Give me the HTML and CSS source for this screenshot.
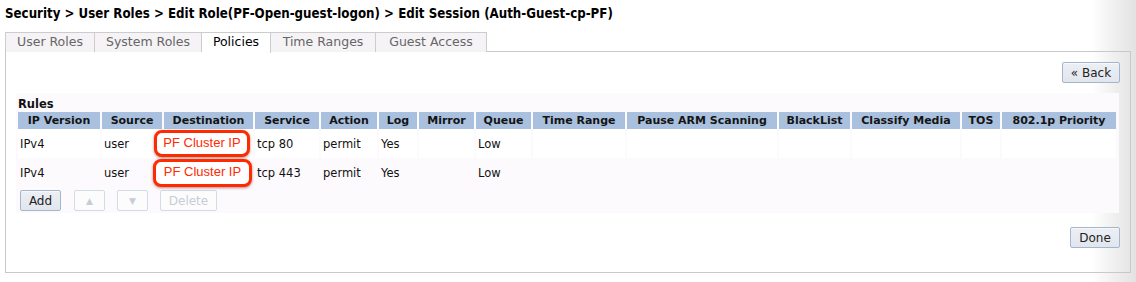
FILE: index.html
```html
<!DOCTYPE html>
<html>
<head>
<meta charset="utf-8">
<link rel="stylesheet" href="styles.css">
</head>
<body>
<div class="page">
  <div class="crumb">Security &gt; User Roles &gt; Edit Role(PF-Open-guest-logon) &gt; Edit Session (Auth-Guest-cp-PF)</div>
  <div class="tabs">
    <div class="tab t1">User Roles</div>
    <div class="tab t2">System Roles</div>
    <div class="tab t3 active">Policies</div>
    <div class="tab t4">Time Ranges</div>
    <div class="tab t5">Guest Access</div>
  </div>
  <div class="panel">
    <div class="toolbar"><button class="btn back">« Back</button></div>
    <div class="rules">
      <div class="rules-title">Rules</div>
      <table class="grid">
        <colgroup>
          <col class="w-ipv"><col class="w-src"><col class="w-dst"><col class="w-svc"><col class="w-act"><col class="w-log"><col class="w-mir"><col class="w-que"><col class="w-tr"><col class="w-arm"><col class="w-bl"><col class="w-cm"><col class="w-tos"><col class="w-pri">
        </colgroup>
        <thead>
          <tr>
            <th>IP Version</th><th>Source</th><th>Destination</th><th>Service</th><th>Action</th><th>Log</th><th>Mirror</th><th>Queue</th><th>Time Range</th><th>Pause ARM Scanning</th><th>BlackList</th><th>Classify Media</th><th>TOS</th><th>802.1p Priority</th>
          </tr>
        </thead>
        <tbody>
          <tr class="r1">
            <td>IPv4</td><td>user</td><td><span class="hl">PF Cluster IP</span></td><td>tcp 80</td><td>permit</td><td>Yes</td><td></td><td>Low</td><td></td><td></td><td></td><td></td><td></td><td></td>
          </tr>
          <tr class="r2">
            <td>IPv4</td><td>user</td><td><span class="hl hl2">PF Cluster IP</span></td><td>tcp 443</td><td>permit</td><td>Yes</td><td></td><td>Low</td><td></td><td></td><td></td><td></td><td></td><td></td>
          </tr>
        </tbody>
      </table>
      <div class="btnrow">
        <button class="btn add">Add</button>
        <button class="btn sm dis">▲</button>
        <button class="btn sm dis">▼</button>
        <button class="btn del dis">Delete</button>
      </div>
    </div>
    <div class="footer"><button class="btn done">Done</button></div>
  </div>
</div>
</body>
</html>
```
FILE: styles.css
```css
html, body {
  margin: 0;
  padding: 0;
  height: 100%;
}
html {
  background: linear-gradient(to right, #ffffff 1092px, #f1f1f1 1112px, #e2e2e2 1136px);
}
body {
  font-family: "DejaVu Sans", Verdana, sans-serif;
  font-size: 11px;
  color: #111;
}
.page {
  padding: 0 5px;
}
.crumb {
  font-family: "DejaVu Sans Condensed", "DejaVu Sans", sans-serif;
  font-weight: bold;
  font-size: 13.2px;
  height: 32px;
  line-height: 28px;
  color: #000;
  white-space: nowrap;
}
.tabs {
  display: flex;
  height: 19px;
}
.tab {
  box-sizing: border-box;
  height: 20px;
  border: 1px solid #cccccc;
  border-left: none;
  border-bottom: none;
  background: #f5f3f5;
  color: #666;
  font-size: 12.5px;
  line-height: 18px;
  text-align: center;
  position: relative;
  z-index: 1;
}
.t1 { width: 90px; border-left: 1px solid #cccccc; }
.t2 { width: 107px; }
.t3 { width: 69px; }
.t4 { width: 105px; }
.t5 { width: 111px; }
.tab.active {
  background: #fff;
  color: #000;
  height: 21px;
}
.panel {
  border: 1px solid #c8c8c8;
  padding: 10px 10px 24px 10px;
}
.toolbar {
  display: flex;
  justify-content: flex-end;
}
.btn {
  box-sizing: border-box;
  font-family: "DejaVu Sans", Verdana, sans-serif;
  font-size: 12px;
  height: 21px;
  padding: 0;
  border: 1px solid #a6b6ca;
  border-radius: 2px;
  background: linear-gradient(#eceff4, #e1e6ee);
  color: #222;
  box-shadow: inset 0 1px 0 #f6f8fb;
}
.back { width: 58px; }
.done { width: 50px; }
.rules {
  margin-top: 10px;
  background: #fdfafd;
  padding: 4px 0 2px 0;
  margin-right: 1px;
}
.rules-title {
  font-weight: bold;
  font-size: 11.5px;
  line-height: 15px;
  padding-left: 2px;
}
.grid {
  border-collapse: separate;
  border-spacing: 2px 0;
  table-layout: fixed;
  width: 1102px;
}
.w-ipv { width: 82px; }
.w-src { width: 60px; }
.w-dst { width: 89px; }
.w-svc { width: 64px; }
.w-act { width: 56px; }
.w-log { width: 38px; }
.w-mir { width: 55px; }
.w-que { width: 55px; }
.w-tr { width: 92px; }
.w-arm { width: 150px; }
.w-bl { width: 71px; }
.w-cm { width: 108px; }
.w-tos { width: 38px; }
.w-pri { width: 114px; }
.grid th {
  background: #a9c1de;
  color: #141414;
  font-size: 11px;
  font-weight: bold;
  height: 17px;
  padding: 0;
  text-align: center;
  white-space: nowrap;
  overflow: hidden;
}
.grid td {
  height: 29px;
  padding: 0 2px;
  font-size: 11.5px;
  color: #111;
  vertical-align: middle;
  white-space: nowrap;
  overflow: visible;
}
.grid .r1 td { background: #ffffff; }
.grid .r2 td { background: #fdfafd; }
.hl {
  display: inline-block;
  box-sizing: border-box;
  width: 96px;
  height: 27px;
  margin-left: -12px;
  border: 3.5px solid #ff2a00;
  border-radius: 8px;
  background: #fff;
  color: #ff2a00;
  font-family: "Liberation Sans", Arial, sans-serif;
  font-size: 13px;
  line-height: 19px;
  text-align: center;
  box-shadow: 0 1px 3px rgba(80, 0, 0, 0.45);
  position: relative;
}
.hl2 {
  width: 99px;
  height: 28px;
  margin-left: -13px;
  line-height: 20px;
}
.btnrow {
  display: flex;
  gap: 12px;
  padding: 3px 0 0 4px;
}
.add { width: 41px; margin-right: 1px; }
.sm { width: 31px; font-size: 9px; }
.del { width: 57px; }
.dis {
  background: #fcfcfd;
  border-color: #d3dbe5;
  color: #c6cdd8;
  box-shadow: none;
}
.footer {
  display: flex;
  justify-content: flex-end;
  margin-top: 14px;
}
```
